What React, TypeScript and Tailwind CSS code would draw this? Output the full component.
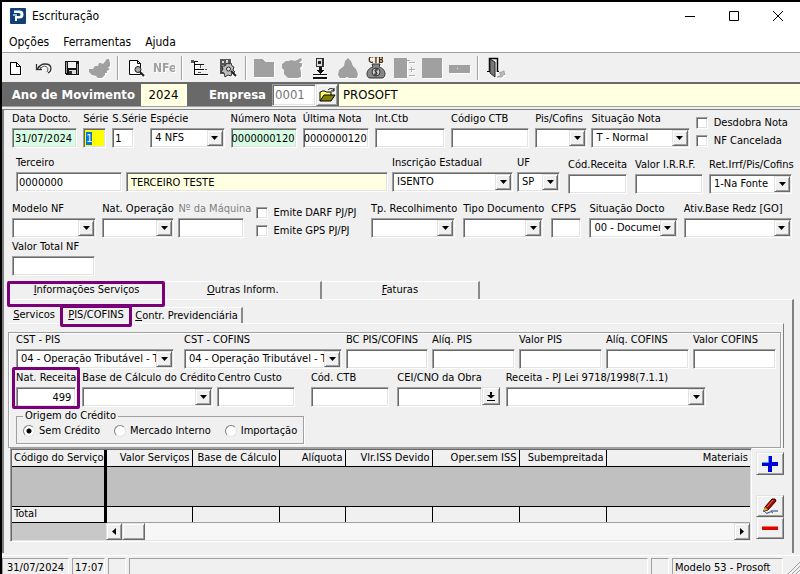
import { useId } from 'react';
import type { ReactNode } from 'react';

const sunken =
  'border border-t-[#a0a0a0] border-l-[#a0a0a0] border-b-white border-r-white shadow-[inset_1px_1px_0_#696969,inset_-1px_-1px_0_#e3e3e3]';
const raised =
  'border border-t-[#e3e3e3] border-l-[#e3e3e3] border-b-[#696969] border-r-[#696969] shadow-[inset_1px_1px_0_#fff,inset_-1px_-1px_0_#a0a0a0] bg-[#f0f0f0]';

type FieldProps = {
  label: string;
  value?: string;
  select?: boolean;
  focused?: boolean;
  className?: string;
  inputClass?: string;
  labelClass?: string;
};

const Field = ({
  label,
  value = '',
  select,
  focused,
  className = 'pr-1',
  inputClass = 'bg-white px-1',
  labelClass = '',
}: FieldProps) => {
  const id = useId();
  return (
    <div className={`min-w-0 ${className}`}>
      <label htmlFor={id} className={`mb-0.5 block h-[14px] leading-[14px] whitespace-nowrap ${labelClass}`}>
        {label}
      </label>
      {select ? (
        <SelectBox id={id} value={value} />
      ) : (
        <input
          id={id}
          defaultValue={value}
          autoFocus={focused}
          onFocus={(e) => e.target.select()}
          className={`block h-5 w-full min-w-0 outline-none selection:bg-[#0078d7] selection:text-white ${sunken} ${inputClass}`}
        />
      )}
    </div>
  );
};

const SelectBox = ({ id, value }: { id: string; value: string }) => (
  <div className="relative">
    <select id={id} className={`block h-5 w-full appearance-none bg-white pr-4 pl-1 outline-none ${sunken}`}>
      <option>{value}</option>
    </select>
    <span className={`pointer-events-none absolute top-0.5 right-0.5 flex h-4 w-4 items-center justify-center ${raised}`}>
      <svg width="7" height="4" viewBox="0 0 7 4">
        <path d="M0 0h7L3.5 4z" />
      </svg>
    </span>
  </div>
);

const Check = ({ label }: { label: string }) => (
  <label className="flex h-[18px] items-center gap-1.5 whitespace-nowrap">
    <input type="checkbox" className={`h-3 w-3 appearance-none bg-white checked:bg-black ${sunken}`} />
    {label}
  </label>
);

const Radio = ({ label, checked }: { label: string; checked?: boolean }) => (
  <label className="flex items-center gap-1 whitespace-nowrap">
    <input
      type="radio"
      name="origem"
      defaultChecked={checked}
      className="h-3 w-3 appearance-none rounded-full border border-t-[#808080] border-r-[#e3e3e3] border-b-[#e3e3e3] border-l-[#808080] bg-white checked:bg-[radial-gradient(circle,#000_2px,#fff_3px)]"
    />
    {label}
  </label>
);

const Svg = ({ children }: { children: ReactNode }) => (
  <svg
    width="22"
    height="22"
    viewBox="0 0 22 22"
    fill="none"
    shapeRendering="crispEdges"
    className="drop-shadow-[1px_1px_0_#fff]"
  >
    {children}
  </svg>
);

const icons: Record<string, ReactNode> = {
  novo: <path d="M5.500 5.500h6l4 4v8h-10zM11.500 5.500v4h4" stroke="#000" fill="#fff" />,
  desfazer: (
    <g shapeRendering="auto" stroke="#333">
      <path d="M3.500 7v5.500H9M4 12.500C6 9 8.500 7 12 7c4 0 6 2 6 4.500 0 2-1 3.500-3 4.500" strokeWidth="1.300" />
      <path d="M7 12c2-2.500 4-3.500 6-2.500 2 1 2.500 3 1 5.500M5 9l3 2" strokeWidth="0.800" />
    </g>
  ),
  salvar: (
    <>
      <path d="M4 4h14v14H5l-1-1z" fill="#111" />
      <path d="M7 5h8v6H7z" fill="#f0f0f0" />
      <path d="M5 5h1v11H5zM16 7h1v10h-1z" fill="#999" />
      <path d="M8 13h7v4H8z" fill="#ddd" />
      <path d="M8 14h3v3H8z" fill="#333" />
    </>
  ),
  confirma: (
    <path
      d="M0 12h4l2-3h3l1-3h2l2 1 4-5h2l1 4 0 3-2 2 2 1-3 2v2h-2v2l-3 3h-4l-2-2-4-1-3-3z"
      fill="#a0a0a0"
      shapeRendering="auto"
    />
  ),
  visualizar: (
    <g shapeRendering="auto">
      <path d="M4.500 3.500h8l3 3v11h-11z" fill="#fff" stroke="#000" />
      <path d="M12.500 3.500v3h3" stroke="#000" />
      <circle cx="13" cy="12.500" r="3" fill="#aaa" stroke="#222" />
      <path d="M15 15l4 4" stroke="#222" strokeWidth="2.200" />
    </g>
  ),
  nfe: (
    <text x="0" y="15" fill="#a0a0a0" fontWeight="bold" fontSize="12">
      NFe
    </text>
  ),
  arvore: (
    <>
      <path d="M5.500 5v13M5.500 7.500h4M5.500 12.500h5M5.500 17.500h5" stroke="#000" />
      <path d="M3 4h6v1H3zM8 7h7v1H8zM10 12h5v1h-5zM10 17h9v1h-9z" fill="#111" />
      <path d="M11 8h1v3h-1zM16 12h2v1h-2zM9 15h3v1H9z" fill="#555" />
      <path d="M2 3h3v3H2z" fill="#555" />
    </>
  ),
  engrenagem: (
    <g shapeRendering="auto">
      <path d="M3 2h11v15H3z" fill="#555" />
      <path d="M5 4h2v2H5zM9 3h2v3H9zM5 8h2v3H5z" fill="#ddd" />
      <path d="M10 6l2 1 2-1 1 3 2 1-1 3 2 2-3 1-1 3-3-1-3 2-1-4-3-1 2-3-1-3 3 0z" fill="#bbb" stroke="#333" />
      <circle cx="11.500" cy="12" r="2" fill="#eee" stroke="#222" />
      <path d="M14 14l5 5" stroke="#222" strokeWidth="2" />
    </g>
  ),
  pasta: <path d="M1 2h8l3 3h9v15H1z" fill="#a0a0a0" />,
  lote: (
    <path
      d="M1 7l4-3h3l2-1 4 1 2-1 4-2 1 2-3 3h3v3l-2 2 1 4v5l-3 1H7l-2-2-2-2v-4L1 11z"
      fill="#a0a0a0"
      shapeRendering="auto"
    />
  ),
  importar: (
    <>
      <path d="M7 1h8v9H7z" fill="#333" />
      <path d="M8 2h5v7H8z" fill="#ddd" />
      <path d="M9 4h3v3H9z" fill="#222" />
      <path d="M10 10h3v3h3l-4.500 4L7 13h3z" fill="#111" />
      <path d="M4 17h14v1H4zM4 20h14v2H4z" fill="#111" />
    </>
  ),
  grupo: (
    <path d="M8 4l3-3 3 3 2 5 3 3 2 5-1 4h-8l-2-1-2 1H3l-2-3 1-5 5-4z" fill="#a0a0a0" shapeRendering="auto" />
  ),
  ctb: (
    <g shapeRendering="auto">
      <path d="M7 7h8l-1 3c4 1 6 4 6 7 0 2-1 4-3 4H5c-2 0-3-2-3-4 0-3 2-6 6-7z" fill="#888" stroke="#333" />
      <circle cx="11" cy="15" r="4" fill="#ccc" stroke="#333" />
      <path d="M13 13c-3-1-4 1-2 2s1 3-2 2M11 11.500v7" stroke="#222" />
      <text x="11" y="6" textAnchor="middle" fontSize="8" fontWeight="bold" fill="#4a2a00">
        CTB
      </text>
    </g>
  ),
  colunas: (
    <>
      <path d="M1 1h13v20H1zM14 3h3v1h-3z" fill="#a0a0a0" />
      <path d="M16 5.500h6M16 12.500h6M16 18.500h6M18.500 10v5" stroke="#b0b0b0" />
    </>
  ),
  bloco: <path d="M1 1h20v20H1z" fill="#a0a0a0" />,
  barra: (
    <>
      <path d="M0 8h21v8H0z" fill="#a0a0a0" />
      <path d="M8 11h1v1H8z" fill="#f0f0f0" />
    </>
  ),
  sair: (
    <g shapeRendering="auto">
      <path d="M4.500 15V1.500h8V15" stroke="#000" strokeWidth="1.500" fill="#f0f0f0" />
      <path d="M5 2l5 3v15l-5-4z" fill="#777" stroke="#222" />
      <path d="M2 14.500h3M12 14.500h2" stroke="#000" />
      <path d="M12 20l3-1 1-3h-2l5-2 1 4-1-1-2 3z" fill="#bbb" stroke="#999" strokeWidth="0.800" />
    </g>
  ),
};

const toolbar = [
  ['novo', 'desfazer', 'salvar', 'confirma'],
  ['visualizar', 'nfe'],
  ['arvore', 'engrenagem'],
  ['pasta', 'lote', 'importar', 'grupo', 'ctb', 'colunas', 'bloco', 'barra'],
  ['sair'],
];

const columns = [
  { title: 'Valor Serviços', width: 'w-[87px]' },
  { title: 'Base de Cálculo', width: 'w-[87px]' },
  { title: 'Alíquota', width: 'w-[66px]' },
  { title: 'Vlr.ISS Devido', width: 'w-[87px]' },
  { title: 'Oper.sem ISS', width: 'w-[87px]' },
  { title: 'Subempreitada', width: 'w-[87px]' },
  { title: 'Materiais', width: 'w-auto' },
];

const statusCell =
  'border-t border-l border-t-[#a0a0a0] border-l-[#a0a0a0] border-r border-r-white flex items-end leading-3 whitespace-nowrap';

const Highlight = ({ className }: { className: string }) => (
  <span className={`pointer-events-none absolute z-10 rounded-xs border-3 border-[#7a007a] ${className}`} />
);

const TitleBar = () => (
  <header className="bg-white text-xs">
    <div className="flex h-7 items-center pl-2">
      <svg width="16" height="16" viewBox="0 0 16 16">
        <rect width="16" height="16" rx="1" fill="#123f78" />
        <path d="M4 2.500h5.500a4 4 0 010 8H7V13H5V8h4a1.500 1.500 0 000-3H4z" fill="#fff" />
        <path d="M3 6h4v2H3z" fill="#7cc4e8" />
      </svg>
      <h1 className="ml-1.5">Escrituração</h1>
      <div className="ml-auto flex">
        {[
          { name: 'Minimizar', d: 'M0 5.500h10' },
          { name: 'Maximizar', d: 'M.5.5h9v9h-9z' },
          { name: 'Fechar', d: 'M0 0l10 10M10 0L0 10' },
        ].map((b) => (
          <button key={b.name} aria-label={b.name} className="flex h-7 w-11 items-center justify-center">
            <svg width="10" height="10" viewBox="0 0 10 10" fill="none" stroke="#000">
              <path d={b.d} />
            </svg>
          </button>
        ))}
      </div>
    </div>
    <nav className="flex h-[22px] items-center gap-3.5 pt-0.5 pl-[7px]">
      <button>Opções</button>
      <button>Ferramentas</button>
      <button>Ajuda</button>
    </nav>
  </header>
);

const YearBar = () => (
  <div className="flex h-[25px] items-stretch border-t-2 border-b border-t-[#696969] border-b-[#a0a0a0] bg-[#696969] text-[13px]">
    <label htmlFor="ano" className="flex w-[139px] shrink-0 items-center justify-end pr-1.5 font-bold text-white">
      Ano de Movimento
    </label>
    <input
      id="ano"
      defaultValue="2024"
      className="w-[46px] border-r border-white bg-[#ffffe1] text-center outline-none"
    />
    <label htmlFor="empresa" className="flex w-[85px] shrink-0 items-center justify-end pr-1.5 font-bold text-white">
      Empresa
    </label>
    <input
      id="empresa"
      defaultValue="0001"
      className={`w-[44px] bg-white px-0.5 text-[#777] outline-none ${sunken}`}
    />
    <button aria-label="Abrir empresa" className={`flex w-[22px] items-center justify-center ${raised}`}>
      <svg width="17" height="16" viewBox="0 0 17 16">
        <path d="M1 14V5h1l1-1h3l1 1h5v3" fill="#ffff66" stroke="#000" />
        <path d="M1 14l4-6h11l-4 6z" fill="#808000" stroke="#000" />
        <path d="M9 3c2-2 4-2 6 0M15 1v3h-3" fill="none" stroke="#000" />
      </svg>
    </button>
    <input
      aria-label="Nome da empresa"
      defaultValue="PROSOFT"
      className="min-w-0 flex-1 border-l border-[#696969] bg-[#ffffe1] px-1 outline-none"
    />
  </div>
);

const NoteForm = () => (
  <section>
    <div className="grid grid-cols-[71fr_29fr_38fr_80fr_72fr_72fr_76fr_84fr_56fr_104fr_104fr] pl-2">
      <Field label="Data Docto." value="31/07/2024" className="pr-1.5" inputClass="bg-[#d7fde4] px-0.5" />
      <Field label="Série" value="1" focused className="pr-1.5" inputClass="bg-[#ffff00] px-0.5" />
      <Field label="S.Série" value="1" className="pr-4" inputClass="bg-white px-0.5" />
      <Field label="Espécie" value="4 NFS" select className="pr-1.5" />
      <Field label="Número Nota" value="0000000120" className="pr-1.5" inputClass="bg-[#d7fde4] px-0" />
      <Field label="Última Nota" value="0000000120" className="pr-1.5" inputClass="bg-white px-0" />
      <Field label="Int.Ctb" className="pr-1.5" />
      <Field label="Código CTB" className="pr-1.5" />
      <Field label="Pis/Cofins" select />
      <Field label="Situação Nota" value="T - Normal" select className="pr-1.5" />
      <div className="pt-0.5">
        <Check label="Desdobra Nota" />
        <Check label="NF Cancelada" />
      </div>
    </div>

    <div className="mt-1.5 grid grid-cols-[110fr_266fr_125fr_51fr_67fr_74fr_91fr] pl-3">
      <Field label="Terceiro" value="0000000" inputClass="bg-white px-0.5" />
      <div className="flex items-end pr-1 pb-0.5">
        <input
          aria-label="Nome do terceiro"
          defaultValue="TERCEIRO TESTE"
          className={`h-5 w-full bg-[#ffffe1] px-1 outline-none ${sunken}`}
        />
      </div>
      <Field label="Inscrição Estadual" value="ISENTO" select />
      <Field label="UF" value="SP" select className="pr-2" />
      <Field label="Cód.Receita" className="pt-0.5 pr-2" />
      <Field label="Valor I.R.R.F." className="pt-0.5 pr-1.5" />
      <Field label="Ret.Irrf/Pis/Cofins" value="1-Na Fonte" select className="pt-0.5 pr-2" />
    </div>

    <div className="mt-2 grid grid-cols-[90fr_76fr_77fr_115fr_92fr_88fr_38fr_94fr_116fr] pl-2">
      <Field label="Modelo NF" select className="pr-1.5" />
      <Field label="Nat. Operação" select />
      <Field label="Nº da Máquina" labelClass="text-[#808080]" className="pr-3" />
      <div className="pt-0.5">
        <Check label="Emite DARF PJ/PJ" />
        <Check label="Emite GPS PJ/PJ" />
      </div>
      <Field label="Tp. Recolhimento" select className="pr-2" />
      <Field label="Tipo Documento" select className="pr-2" />
      <Field label="CFPS" className="pr-2" />
      <Field label="Situação Docto" value="00 - Documento" select className="pr-1.5" />
      <Field label="Ativ.Base Redz [GO]" select className="pr-2" />
    </div>

    <div className="pl-2">
      <Field label="Valor Total NF" className="w-[87px] pr-1" />
    </div>
  </section>
);

const PisCofins = () => (
  <div className="mt-2 mr-0.5 border border-[#a0a0a0] pb-[3px] pl-[7px] shadow-[inset_1px_1px_0_#fff,1px_1px_0_#fff]">
    <div className="grid grid-cols-[168fr_162fr_86fr_87fr_87fr_87fr_87fr]">
      <Field label="CST - PIS" value="04 - Operação Tributável - Tributação" select className="pr-2.5" />
      <Field label="CST - COFINS" value="04 - Operação Tributável - Tributação" select />
      <Field label="BC PIS/COFINS" />
      <Field label="Alíq. PIS" />
      <Field label="Valor PIS" />
      <Field label="Alíq. COFINS" />
      <Field label="Valor COFINS" />
    </div>
    <div className="mt-0.5 grid grid-cols-[65fr_136fr_94fr_87fr_106fr_204fr_72fr]">
      <div className="relative">
        <Field label="Nat. Receita" value="499" className="pr-1.5" inputClass="bg-white px-1 text-right" />
        <Highlight className="-top-1 right-0.5 -bottom-0.5 -left-1" />
      </div>
      <Field label="Base de Cálculo do Crédito" select />
      <Field label="Centro Custo" className="pr-4" />
      <Field label="Cód. CTB" className="pr-2" />
      <div className="flex items-end pr-1.5">
        <Field label="CEI/CNO da Obra" className="flex-1" />
        <button
          aria-label="Buscar obra"
          className={`mb-0.5 flex h-[18px] w-[18px] items-center justify-center ${raised}`}
        >
          <svg width="8" height="9" viewBox="0 0 8 9">
            <path d="M3 0h2v3h3L4 6.500 0 3h3zM0 8h8v1H0z" />
          </svg>
        </button>
      </div>
      <Field label="Receita - PJ Lei 9718/1998(7.1.1)" select className="pr-0.5" />
    </div>
    <fieldset className="mt-0.5 h-[35px] w-[288px] border border-[#a0a0a0] px-1.5 shadow-[1px_1px_0_#fff]">
      <legend className="h-[14px] px-0.5 leading-[14px]">Origem do Crédito</legend>
      <div className="flex gap-3.5">
        <Radio label="Sem Crédito" checked />
        <Radio label="Mercado Interno" />
        <Radio label="Importação" />
      </div>
    </fieldset>
  </div>
);

const ServiceTable = () => (
  <div className="flex items-start gap-1">
    <div className={`min-w-0 flex-1 bg-[#c8c8c8] p-px ${sunken}`}>
      <table className="w-full table-fixed border-collapse leading-[14px] whitespace-nowrap">
        <thead>
          <tr className="h-4 border-b border-black bg-[#f0f0f0]">
            <th className="w-[93px] border-r-3 border-black px-0.5 text-left font-normal">Código do Serviço</th>
            {columns.map((c) => (
              <th
                key={c.title}
                className={`${c.width} border-r border-black px-0.5 text-right font-normal last:border-r-0`}
              >
                {c.title}
              </th>
            ))}
          </tr>
        </thead>
        <tbody>
          <tr className="h-10 bg-[#c0c0c0]">
            <td className="border-r-3 border-black" />
            <td colSpan={columns.length} />
          </tr>
        </tbody>
        <tfoot>
          <tr className="h-4 border-t border-black bg-[#f0f0f0]">
            <td className="border-r-3 border-b border-black px-0.5">Total</td>
            {columns.map((c) => (
              <td key={c.title} className="border-r border-b border-r-black border-b-[#a0a0a0] last:border-r-0" />
            ))}
          </tr>
        </tfoot>
      </table>
      <div className="ml-[94px] flex h-[17px] bg-[#f7f7f7]">
        <button aria-label="Rolar para a esquerda" className={`flex w-4 items-center justify-center ${raised}`}>
          <svg width="4" height="7" viewBox="0 0 4 7">
            <path d="M4 0v7L0 3.500z" />
          </svg>
        </button>
        <span className={`w-[23px] ${raised}`} />
        <button aria-label="Rolar para a direita" className={`ml-auto flex w-4 items-center justify-center ${raised}`}>
          <svg width="4" height="7" viewBox="0 0 4 7">
            <path d="M0 0v7l4-3.500z" />
          </svg>
        </button>
      </div>
    </div>
    <div className="flex w-7 flex-col pt-1">
      <button aria-label="Incluir" className={`mb-5 flex h-[23px] items-center justify-center ${raised}`}>
        <svg width="16" height="16" viewBox="0 0 16 16">
          <path d="M6 0h4v6h6v4h-6v6H6v-6H0V6h6z" fill="#0000d8" />
          <path d="M6.500 0v6.500H0" fill="none" stroke="#4aa0f0" />
        </svg>
      </button>
      <button aria-label="Alterar" className={`flex h-[22px] items-center justify-center ${raised}`}>
        <svg width="17" height="17" viewBox="0 0 17 17">
          <path d="M3 9l7-8h3l1 2-8 9-4 1z" fill="#a01008" stroke="#300" />
          <path d="M5 9l6-7" stroke="#f07050" />
          <path d="M1 13l2-4 3 3z" fill="#e0b020" />
          <path d="M1 13c3 0 2 3 5 2 3-2 4-1 5 0M9 13h7" fill="none" stroke="#123a80" />
        </svg>
      </button>
      <button aria-label="Excluir" className={`flex h-[22px] items-center justify-center ${raised}`}>
        <svg width="16" height="4" viewBox="0 0 16 4">
          <path d="M0 0h16v4H0z" fill="#d80000" />
          <path d="M0 0h16v1H0z" fill="#ff7050" />
        </svg>
      </button>
    </div>
  </div>
);

const tab = 'border-t border-t-white border-r-2 border-r-[#8a8a8a]';

const Tabs = () => (
  <section className="mt-[5px] mr-1.5 ml-1 flex flex-1 flex-col">
    <div className="flex h-[18px]">
      <button className="relative w-1/5">
        <u>I</u>nformações Serviços
        <Highlight className="top-0 right-0 -left-px h-[26px]" />
      </button>
      <button className={`w-1/5 ${tab}`}>
        <u>O</u>utras Inform.
      </button>
      <button className={`w-1/5 ${tab}`}>
        <u>F</u>aturas
      </button>
    </div>
    <div className="flex flex-1 flex-col border-t border-r-2 border-t-white border-r-[#808080] pt-[7px] pr-2">
      <div className="flex h-4">
        <button className="w-[52px]">
          <u>S</u>ervicos
        </button>
        <button className="relative w-[72px]">
          <u>P</u>IS/COFINS
          <Highlight className="-top-0.5 right-0 -bottom-1 left-0" />
        </button>
        <button className={`w-[111px] ${tab}`}>
          <u>C</u>ontr. Previdenciária
        </button>
      </div>
      <div className="border-t border-r border-t-white border-r-[#808080]">
        <PisCofins />
      </div>
      <div className="ml-0.5">
        <ServiceTable />
      </div>
    </div>
  </section>
);

export default function App() {
  return (
    <div className="flex min-h-screen flex-col border-t-2 border-l-2 border-black bg-[#f0f0f0] font-['DejaVu_Sans_Condensed','DejaVu_Sans',sans-serif] text-[11px] text-black">
      <TitleBar />
      <div className="flex h-[30px] items-center border-t border-[#a0a0a0]" role="toolbar">
        {toolbar.map((group, i) => (
          <div key={i} className="flex items-center">
            {i > 0 && <span className="mx-[3px] h-6 w-0.5 border-r border-l border-l-[#a0a0a0] border-r-white" />}
            {group.map((name) => (
              <button key={name} aria-label={name} className="flex h-6 w-7 items-center justify-center">
                <Svg>{icons[name]}</Svg>
              </button>
            ))}
          </div>
        ))}
      </div>
      <YearBar />
      <main className="mt-0.5 flex flex-1 flex-col border-t border-l-2 border-[#808080] pt-0.5">
        <NoteForm />
        <Tabs />
      </main>
      <footer className="mt-0.5 flex h-[19px] shrink-0 gap-[3px] border-t border-white pt-0.5">
        <span className={`w-[67px] pl-1 ${statusCell}`}>31/07/2024</span>
        <span className={`w-[33px] pl-0.5 ${statusCell}`}>17:07</span>
        <span className={`w-[18px] ${statusCell}`} />
        <span className={`flex-1 ${statusCell}`} />
        <span className={`w-[18px] ${statusCell}`} />
        <span className={`w-[111px] pl-0.5 ${statusCell}`}>Modelo 53 - Prosoft</span>
        <svg width="14" height="16" viewBox="0 0 14 16" stroke="#a0a0a0">
          <path d="M2 16L14 4M6 16l8-8M10 16l4-4" />
        </svg>
      </footer>
    </div>
  );
}
